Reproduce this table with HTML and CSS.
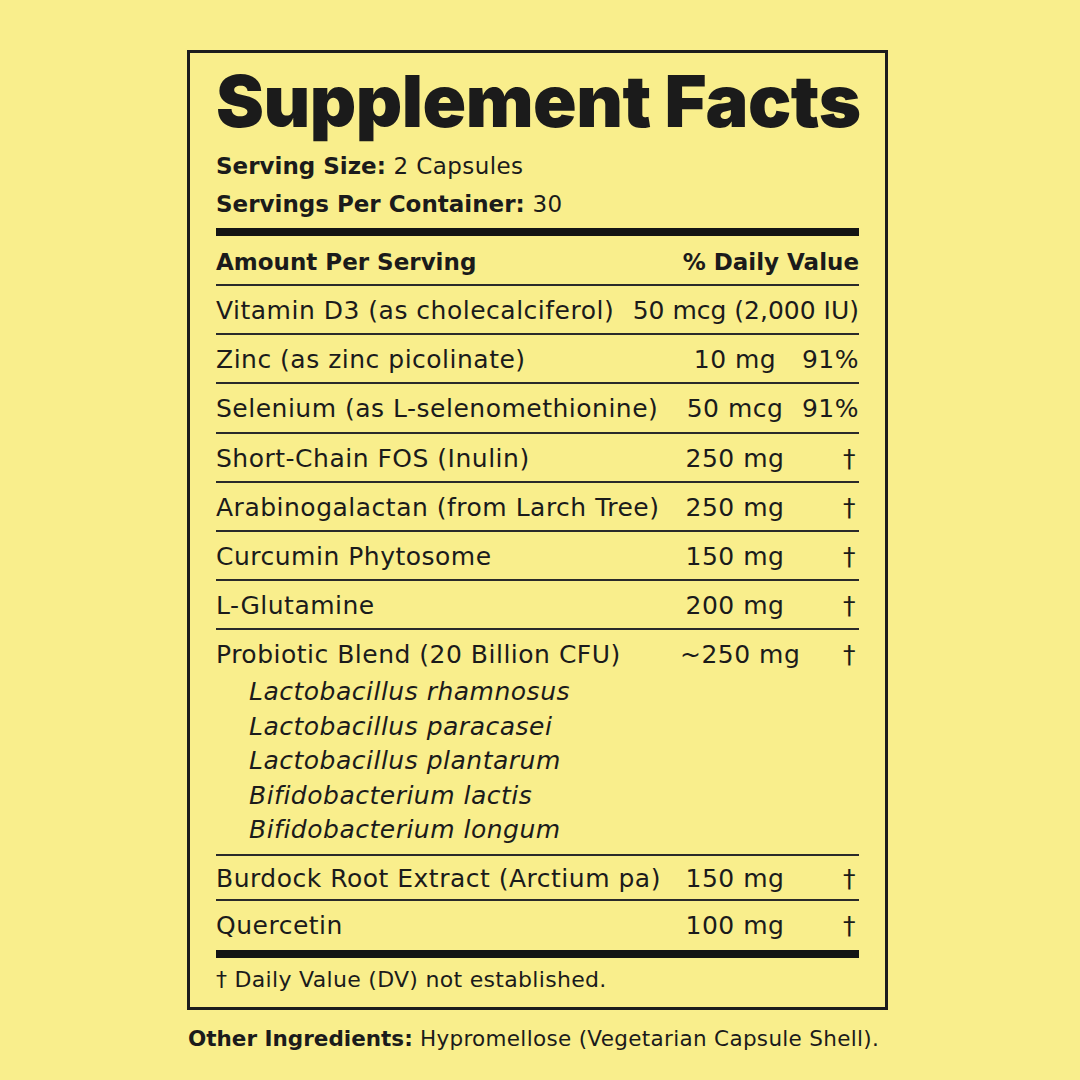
FILE: index.html
```html
<!DOCTYPE html>
<html lang="en">
<head>
<meta charset="utf-8">
<title>Supplement Facts</title>
<link rel="stylesheet" href="styles.css">
</head>
<body>
<main class="page">
  <section class="label">
    <h1 class="title">Supplement Facts</h1>
    <p class="serving"><b>Serving Size:</b> 2 Capsules</p>
    <p class="serving"><b>Servings Per Container:</b> 30</p>
    <div class="bar top"></div>
    <div class="row head flexrow">
      <span class="name">Amount Per Serving</span>
      <span>% Daily Value</span>
    </div>
    <div class="row flexrow">
      <span class="name">Vitamin D3 (as cholecalciferol)</span>
      <span class="tight">50 mcg (2,000 IU)</span>
    </div>
    <div class="row">
      <span class="name">Zinc (as zinc picolinate)</span>
      <span class="amt">10 mg</span>
      <span class="dv">91%</span>
    </div>
    <div class="row">
      <span class="name">Selenium (as L-selenomethionine)</span>
      <span class="amt">50 mcg</span>
      <span class="dv">91%</span>
    </div>
    <div class="row">
      <span class="name">Short-Chain FOS (Inulin)</span>
      <span class="amt">250 mg</span>
      <span class="dv dag">†</span>
    </div>
    <div class="row">
      <span class="name">Arabinogalactan (from Larch Tree)</span>
      <span class="amt">250 mg</span>
      <span class="dv dag">†</span>
    </div>
    <div class="row">
      <span class="name">Curcumin Phytosome</span>
      <span class="amt">150 mg</span>
      <span class="dv dag">†</span>
    </div>
    <div class="row">
      <span class="name">L-Glutamine</span>
      <span class="amt">200 mg</span>
      <span class="dv dag">†</span>
    </div>
    <div class="row blend">
      <div class="name">
        <div>Probiotic Blend (20 Billion CFU)</div>
        <ul class="strains">
          <li>Lactobacillus rhamnosus</li>
          <li>Lactobacillus paracasei</li>
          <li>Lactobacillus plantarum</li>
          <li>Bifidobacterium lactis</li>
          <li>Bifidobacterium longum</li>
        </ul>
      </div>
      <span class="amt">~250 mg</span>
      <span class="dv dag">†</span>
    </div>
    <div class="row short">
      <span class="name">Burdock Root Extract (Arctium pa)</span>
      <span class="amt">150 mg</span>
      <span class="dv dag">†</span>
    </div>
    <div class="row last">
      <span class="name">Quercetin</span>
      <span class="amt">100 mg</span>
      <span class="dv dag">†</span>
    </div>
    <div class="bar"></div>
    <p class="foot">† Daily Value (DV) not established.</p>
  </section>
  <p class="other"><b>Other Ingredients:</b> Hypromellose (Vegetarian Capsule Shell).</p>
</main>
</body>
</html>
```
FILE: styles.css
```css
* { box-sizing: border-box; }
html, body {
  margin: 0;
  padding: 0;
  background: #f9ee8c;
}
body {
  font-family: "DejaVu Sans", "Inter", sans-serif;
  color: #1b1b1b;
  width: 1080px;
  height: 1080px;
  overflow: hidden;
}
.page {
  padding: 50px 0 0 187px;
}
.label {
  width: 701px;
  border: 3px solid #1c1c1c;
  padding: 2px 26px 14px 26px;
}
.title {
  margin: 0;
  font-family: "Inter", sans-serif;
  font-size: 72px;
  font-weight: 900;
  line-height: 92px;
  letter-spacing: -0.5px;
  white-space: nowrap;
}
.serving {
  margin: 0;
  font-size: 23px;
  line-height: 38px;
  font-weight: 400;
  letter-spacing: 0.4px;
  white-space: nowrap;
}
.serving b { font-weight: 700; letter-spacing: 0; }
.bar {
  height: 8px;
  background: #141414;
}
.bar.top { margin-top: 5px; }
.row {
  display: grid;
  grid-template-columns: minmax(0, 1fr) 110px 69px;
  align-items: start;
  font-size: 25px;
  line-height: 30px;
  letter-spacing: 0.5px;
  padding: 10px 0 7.2px;
  border-bottom: 2px solid #2a2a2a;
  white-space: nowrap;
}
.flexrow {
  display: flex;
  justify-content: space-between;
}
.tight { letter-spacing: 0; }
.row.head {
  font-size: 23px;
  font-weight: 700;
  letter-spacing: 0;
  padding: 11px 0 7px;
}
.row.blend { padding-bottom: 6.5px; }
.row.short { padding: 8px 0 5px; }
.row.last { border-bottom: none; padding: 10px 0 9px; }
.amt { text-align: center; }
.dv { text-align: right; }
.dag { padding-right: 3px; }
.strains {
  list-style: none;
  margin: 5px 0 0;
  padding: 0 0 0 33px;
  font-style: italic;
}
.strains li { line-height: 34.5px; }
.foot {
  margin: 0;
  font-size: 22px;
  line-height: 26px;
  letter-spacing: 0.3px;
  padding: 9px 0 0;
  white-space: nowrap;
}
.other {
  margin: 15px 0 0 1px;
  font-size: 21.5px;
  line-height: 28px;
  letter-spacing: 0.32px;
  white-space: nowrap;
}
.other b { font-weight: 700; letter-spacing: 0; }
```
